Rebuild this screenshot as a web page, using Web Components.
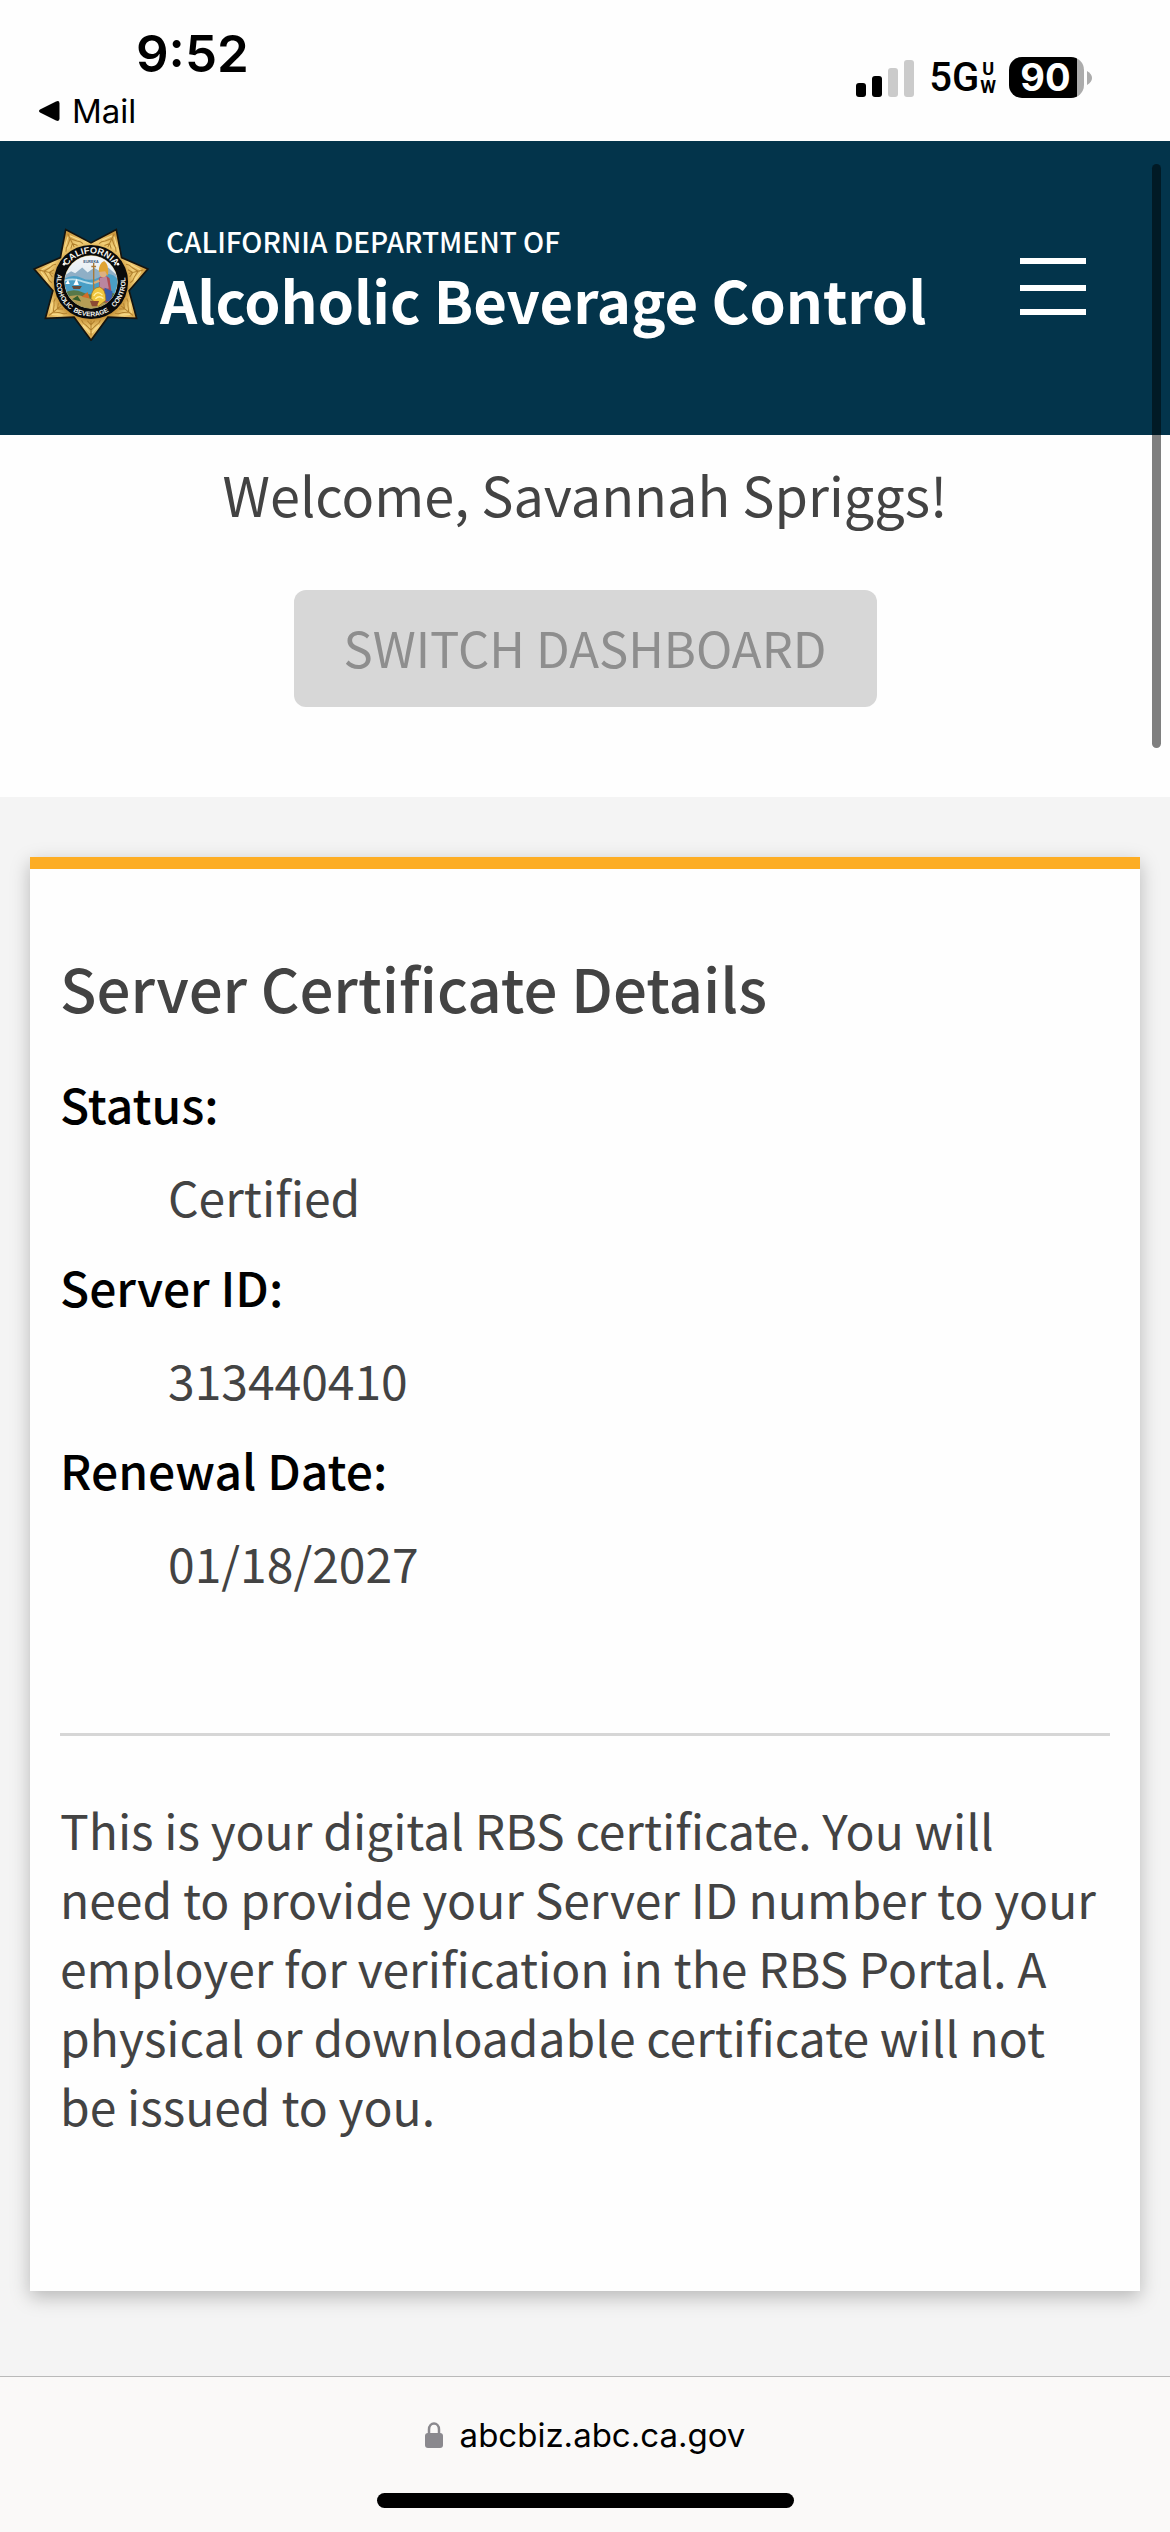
<!DOCTYPE html>
<html lang="en">
<head>
  <meta charset="utf-8">
  <meta name="viewport" content="width=device-width, initial-scale=1">
  <title>Alcoholic Beverage Control</title>
  <style>
    body {
      margin: 0;
      font-family: "Noto Sans CJK SC", "Open Sans", sans-serif;
      font-size: 48px;
      line-height: 69px;
      color: #434343;
      background: #fefefe;
    }
  </style>
</head>
<body>
  <abc-app>
    <status-bar slot="top" time="9:52" back="Mail" battery="90"></status-bar>
    <site-header slot="top">
      <span slot="agency">CALIFORNIA DEPARTMENT OF</span>
      <span slot="name">Alcoholic Beverage Control</span>
    </site-header>
    <welcome-banner name="Savannah Spriggs"></welcome-banner>
    <certificate-card heading="Server Certificate Details">
      <detail-item label="Status:">Certified</detail-item>
      <detail-item label="Server ID:">313440410</detail-item>
      <detail-item label="Renewal Date:">01/18/2027</detail-item>
      <span slot="note">This is your digital RBS certificate. You will need to provide your Server ID number to your employer for verification in the RBS Portal. A physical or downloadable certificate will not be issued to you.</span>
    </certificate-card>
    <browser-bar slot="bottom">abcbiz.abc.ca.gov</browser-bar>
  </abc-app>

  <script>
    class AbcApp extends HTMLElement {
      constructor() {
        super();
        this.attachShadow({ mode: 'open' });
        this.shadowRoot.innerHTML = `
          <style>
            :host {
              display: flex;
              flex-direction: column;
              min-height: 100vh;
              position: relative;
            }

            main {
              flex: 1;
              background: #f4f4f4;
            }

            .scrollbar {
              position: absolute;
              top: 164px;
              right: 9px;
              width: 9px;
              height: 584px;
              border-radius: 5px;
              background: rgba(0,0,0,0.5);
            }
          </style>

          <slot name="top"></slot>
          <main><slot></slot></main>
          <slot name="bottom"></slot>
          <div class="scrollbar"></div>
        `;
      }
    }

    class StatusBar extends HTMLElement {
      constructor() {
        super();
        this.attachShadow({ mode: 'open' });
      }

      connectedCallback() {
        this.shadowRoot.innerHTML = `
          <style>
            :host {
              display: flex;
              justify-content: space-between;
              align-items: flex-start;
              box-sizing: border-box;
              height: 141px;
              padding: 24px 78px 0 38px;
              font-family: Inter, "Liberation Sans", sans-serif;
              color: #000;
            }

            .time {
              padding-left: 98px;
              font-size: 51px;
              font-weight: 600;
              line-height: 60px;
            }

            a {
              display: flex;
              align-items: center;
              gap: 12px;
              color: inherit;
              font-size: 33px;
              line-height: 54px;
              text-decoration: none;
            }

            .right {
              display: flex;
              align-items: center;
              padding-top: 33px;
            }

            .signal {
              width: 58px;
              height: 38px;
              margin-right: 15px;
            }

            .network {
              display: flex;
              align-items: center;
              gap: 1px;
              margin-right: 13px;
              font-family: "Liberation Sans Narrow", Roboto, sans-serif;
              font-size: 40px;
              font-weight: 500;
              line-height: 40px;
            }

            .band {
              display: flex;
              flex-direction: column;
              align-items: center;
              font-family: Roboto, sans-serif;
              font-size: 18px;
              font-weight: 700;
              line-height: 18px;
            }

            .battery {
              display: flex;
              align-items: center;
              gap: 3px;
            }

            .level {
              box-sizing: border-box;
              width: 75px;
              height: 41px;
              padding-right: 2px;
              border-radius: 13px;
              background: linear-gradient(to right, #000 68px, #acacac 68px);
              color: #fff;
              font-size: 38px;
              font-weight: 700;
              line-height: 41px;
              text-align: center;
            }

            .battery svg {
              width: 5px;
              height: 14px;
            }
          </style>

          <div>
            <div class="time">${this.getAttribute('time')}</div>
            <a href="#mail">
              <svg width="22" height="22" viewBox="0 0 22 22"><path d="M2 9.500Q0 11 2 12.500L18 20.500Q21.500 22 21.500 18.500V3.500Q21.500 0 18 1.500Z"/></svg>
              ${this.getAttribute('back')}
            </a>
          </div>
          <div class="right">
            <svg class="signal" viewBox="0 0 58 38">
              <rect x="0" y="24" width="10" height="14" rx="3"/>
              <rect x="16" y="17" width="10" height="21" rx="3"/>
              <rect x="32" y="9" width="10" height="29" rx="3" fill="#cbcbcb"/>
              <rect x="48" y="1" width="10" height="37" rx="3" fill="#cbcbcb"/>
            </svg>
            <div class="network">5G<span class="band"><span>U</span><span>W</span></span></div>
            <div class="battery">
              <div class="level">${this.getAttribute('battery')}</div>
              <svg viewBox="0 0 5 14"><path d="M0 0Q5 3 5 7T0 14Z" fill="#acacac"/></svg>
            </div>
          </div>
        `;
      }
    }

    class StarBadge extends HTMLElement {
      constructor() {
        super();
        this.attachShadow({ mode: 'open' });
      }

      connectedCallback() {
        // seven-pointed star, one tip straight down
        const points = [];
        const leaves = [];
        for (let i = 0; i < 14; i++) {
          const angle = Math.PI / 2 + i * Math.PI / 7;
          const r = i % 2 ? 116 : 173;
          points.push(`${(175 + r * Math.cos(angle)).toFixed(1)},${(175 + r * Math.sin(angle)).toFixed(1)}`);
          if (i % 2 === 0) {
            leaves.push(`<use href="#leaf" transform="rotate(${i * 180 / 7} 175 175)"/>`);
          }
        }

        this.shadowRoot.innerHTML = `
          <style>
            :host {
              display: block;
              width: 118px;
              height: 118px;
            }

            svg {
              display: block;
              width: 100%;
              height: 100%;
            }
          </style>

          <svg viewBox="0 0 350 350" role="img" aria-label="California Alcoholic Beverage Control badge">
            <defs>
              <radialGradient id="gold">
                <stop offset="0.6" stop-color="#c08a30"/>
                <stop offset="0.78" stop-color="#f2cf78"/>
                <stop offset="1" stop-color="#cd9a40"/>
              </radialGradient>
              <linearGradient id="sky" x2="0" y2="1">
                <stop offset="0" stop-color="#f5f6f8"/>
                <stop offset="1" stop-color="#c3dbea"/>
              </linearGradient>
              <clipPath id="scene"><circle cx="175" cy="175" r="78"/></clipPath>
              <path id="north" d="M90 175A85 85 0 0 1 260 175"/>
              <path id="south" d="M84 129A102 102 0 1 0 266 129"/>
              <g id="leaf" fill="none" stroke="#b07f2c" stroke-width="3">
                <path d="M175 334V290M175 318L160 303M175 318L190 303M160 303Q150 298 147 288M190 303Q200 298 203 288M175 302L164 290M175 302L186 290"/>
                <path d="M172 326L151 302M178 326L199 302" stroke="#f8dc8c"/>
              </g>
            </defs>
            <polygon points="${points.join(' ')}" fill="url(#gold)" stroke="#15140f" stroke-width="5"/>
            ${leaves.join('')}
            <circle cx="175" cy="175" r="110" fill="#080a0b"/>
            <circle cx="175" cy="175" r="79" fill="#d1b46b"/>
            <g clip-path="url(#scene)">
              <rect x="95" y="95" width="160" height="160" fill="url(#sky)"/>
              <path d="M95 157L116 143L128 149L149 132L165 147L184 133L203 144L226 132L255 158V190H95Z" fill="#8fafc6"/>
              <path d="M95 166Q122 150 148 163T205 158T255 169V220H95Z" fill="#4a9fc6"/>
              <path d="M95 171Q120 163 143 171T180 180" fill="none" stroke="#b5dcea" stroke-width="5"/>
              <path d="M95 207Q123 192 151 206T207 201L255 211V255H95Z" fill="#577849"/>
              <path d="M95 223Q132 204 173 225T255 228V255H95Z" fill="#b59d55"/>
              <path d="M118 187H148L142 196H123Z" fill="#694c3a"/>
              <path d="M123 184L132 165L139 184Z" fill="#fff"/>
              <path d="M99 181L107 168L112 181Z" fill="#fff"/>
              <path d="M183 119V207M176 129H190" stroke="#a87838" stroke-width="4"/>
              <path d="M198 164Q214 147 230 164L238 221L224 239L203 226Z" fill="#b34b52"/>
              <path d="M201 163L221 158L228 194L201 195Z" fill="#ba86a0"/>
              <path d="M216 192L239 203L235 235L209 229Z" fill="#385eac"/>
              <circle cx="211" cy="150" r="11" fill="#ddb081"/>
              <path d="M198 145Q198 120 214 113Q230 123 225 157L217 143Z" fill="#dfa331"/>
              <path d="M200 171L184 178" stroke="#d8ad7c" stroke-width="7"/>
              <path d="M175 224Q176 192 200 190Q219 195 219 229L197 247Z" fill="#efc63e" stroke="#9a6820" stroke-width="2"/>
              <path d="M183 216Q194 198 209 214M188 225Q199 213 212 224" fill="none" stroke="#fff0a4" stroke-width="4"/>
              <path d="M147 219L165 205L171 224Z" fill="#d26c28"/>
              <path d="M119 226L135 216L146 233Z" fill="#365e2c"/>
              <path d="M172 231L199 231L192 247H178Z" fill="#8b4a32"/>
            </g>
            <g font-family="Liberation Sans, sans-serif" font-weight="700" text-anchor="middle" fill="#f7f7f2">
              <text x="175" y="119" font-size="11" fill="#36557b">EUREKA</text>
              <text font-size="27"><textPath href="#north" startOffset="50%">CALIFORNIA</textPath></text>
              <text font-size="20"><textPath href="#south" startOffset="20%">ALCOHOLIC</textPath></text>
              <text font-size="20"><textPath href="#south" startOffset="50%">BEVERAGE</textPath></text>
              <text font-size="20"><textPath href="#south" startOffset="80%">CONTROL</textPath></text>
              <circle cx="95" cy="122" r="4"/>
              <circle cx="255" cy="122" r="4"/>
            </g>
          </svg>
        `;
      }
    }

    class SiteHeader extends HTMLElement {
      constructor() {
        super();
        this.attachShadow({ mode: 'open' });
        this.shadowRoot.innerHTML = `
          <style>
            :host {
              display: block;
              background: #03344b;
              color: #fff;
            }

            header {
              display: flex;
              align-items: center;
              justify-content: space-between;
              padding: 82px 84px 90px 32px;
            }

            .brand {
              display: flex;
              align-items: flex-start;
              gap: 10px;
              color: inherit;
              text-decoration: none;
            }

            .titles {
              display: flex;
              flex-direction: column;
              gap: 6px;
              padding-bottom: 12px;
            }

            .agency {
              padding-left: 6px;
              font-size: 28px;
              font-weight: 500;
              line-height: 36px;
            }

            .name {
              font-size: 58px;
              font-weight: 700;
              line-height: 68px;
              white-space: nowrap;
            }

            button {
              display: block;
              padding: 6px 0 0;
              border: 0;
              background: none;
              color: inherit;
            }

            button svg {
              display: block;
            }
          </style>

          <header>
            <a class="brand" href="#home">
              <star-badge></star-badge>
              <span class="titles">
                <span class="agency"><slot name="agency"></slot></span>
                <span class="name"><slot name="name"></slot></span>
              </span>
            </a>
            <button type="button" aria-label="Menu">
              <svg width="66" height="58" viewBox="0 0 66 58" fill="currentColor">
                <rect width="66" height="6"/>
                <rect y="27" width="66" height="6"/>
                <rect y="51" width="66" height="6"/>
              </svg>
            </button>
          </header>
        `;
      }
    }

    class WelcomeBanner extends HTMLElement {
      constructor() {
        super();
        this.attachShadow({ mode: 'open' });
      }

      connectedCallback() {
        this.shadowRoot.innerHTML = `
          <style>
            :host {
              display: flex;
              flex-direction: column;
              align-items: center;
              gap: 60px;
              padding: 23px 30px 90px;
              background: #fefefe;
            }

            h1 {
              margin: 0;
              font-size: 54px;
              font-weight: 400;
              line-height: 72px;
            }

            button {
              padding: 22px 50px 26px;
              border: 0;
              border-radius: 12px;
              background: #d7d7d7;
              color: #8e8e8e;
              font: inherit;
              font-size: 49px;
            }
          </style>

          <h1>Welcome, ${this.getAttribute('name')}!</h1>
          <button type="button" disabled>SWITCH DASHBOARD</button>
        `;
      }
    }

    class CertificateCard extends HTMLElement {
      constructor() {
        super();
        this.attachShadow({ mode: 'open' });
      }

      connectedCallback() {
        this.shadowRoot.innerHTML = `
          <style>
            :host {
              display: block;
              padding: 60px 30px 84px;
            }

            section {
              padding: 79px 30px 151px;
              border-top: 12px solid #fdad24;
              background: #fefefe;
              box-shadow: 0 6px 18px rgba(0,0,0,0.25);
            }

            h2 {
              margin: 0 0 43px;
              font-size: 60px;
              font-weight: 500;
              line-height: 78px;
            }

            .details {
              display: flex;
              flex-direction: column;
              gap: 21px;
            }

            hr {
              height: 3px;
              margin: 136px 0 59px;
              border: 0;
              background: #d6d6d6;
            }

            p {
              margin: 0;
            }
          </style>

          <section>
            <h2>${this.getAttribute('heading')}</h2>
            <div class="details"><slot></slot></div>
            <hr>
            <p><slot name="note"></slot></p>
          </section>
        `;
      }
    }

    class DetailItem extends HTMLElement {
      constructor() {
        super();
        this.attachShadow({ mode: 'open' });
      }

      connectedCallback() {
        this.shadowRoot.innerHTML = `
          <style>
            :host {
              display: block;
            }

            dl {
              margin: 0;
            }

            dt {
              color: #000;
              font-weight: 500;
            }

            dd {
              margin: 24px 0 0 108px;
            }
          </style>

          <dl>
            <dt>${this.getAttribute('label')}</dt>
            <dd><slot></slot></dd>
          </dl>
        `;
      }
    }

    class BrowserBar extends HTMLElement {
      constructor() {
        super();
        this.attachShadow({ mode: 'open' });
        this.shadowRoot.innerHTML = `
          <style>
            :host {
              display: flex;
              flex-direction: column;
              align-items: center;
              gap: 36px;
              padding: 36px 0 24px;
              border-top: 1px solid #b9b9b9;
              background: #faf9f8;
              color: #000;
              font-family: Inter, "Liberation Sans", sans-serif;
            }

            a {
              display: flex;
              align-items: center;
              gap: 17px;
              color: inherit;
              font-size: 33px;
              line-height: 44px;
              text-decoration: none;
            }

            .home {
              width: 417px;
              height: 15px;
              border-radius: 8px;
              background: #000;
            }
          </style>

          <a href="#address">
            <svg width="18" height="26" viewBox="0 0 18 26">
              <path d="M4 13V7.500C4 -0.500 14 -0.500 14 7.500V13" fill="none" stroke="#8a898e" stroke-width="2.500"/>
              <rect y="11" width="18" height="15" rx="3" fill="#8a898e"/>
            </svg>
            <slot></slot>
          </a>
          <div class="home"></div>
        `;
      }
    }

    customElements.define('abc-app', AbcApp);
    customElements.define('status-bar', StatusBar);
    customElements.define('star-badge', StarBadge);
    customElements.define('site-header', SiteHeader);
    customElements.define('welcome-banner', WelcomeBanner);
    customElements.define('certificate-card', CertificateCard);
    customElements.define('detail-item', DetailItem);
    customElements.define('browser-bar', BrowserBar);
  </script>
</body>
</html>
